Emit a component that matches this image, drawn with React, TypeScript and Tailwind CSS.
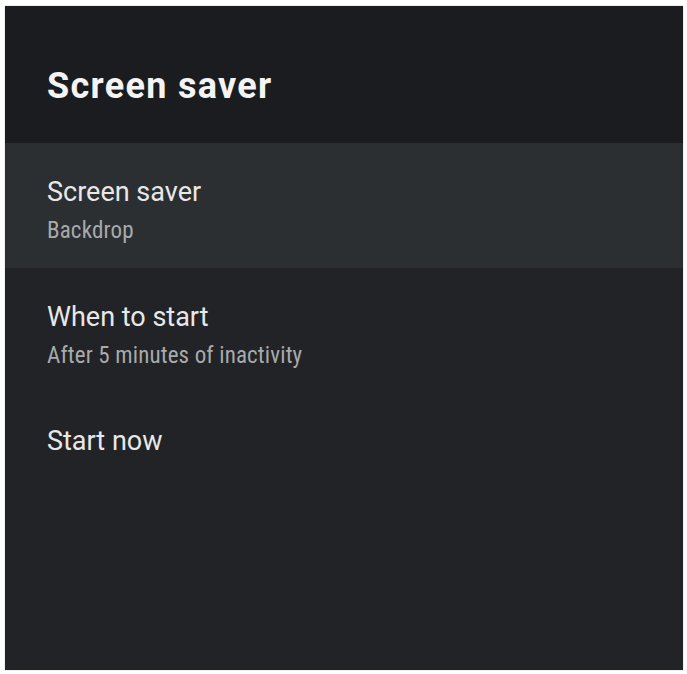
import React from 'react';

type Item = { title: string; summary?: string; selected?: boolean };

const items: Item[] = [
  { title: 'Screen saver', summary: 'Backdrop', selected: true },
  { title: 'When to start', summary: 'After 5 minutes of inactivity' },
  { title: 'Start now' },
];

const SettingRow = ({ title, summary, selected }: Item) => (
  <div className={`${selected ? 'bg-[#2c2f32] pb-[26px]' : 'pb-[25px]'} pl-[42px] pt-[36px]`}>
    <div className="text-[27px] leading-none text-[#e8e8e8]">{title}</div>
    {summary && (
      <div className="mt-[13px] text-[23px] leading-none tracking-[0.15px] text-[#a8aaac] [font-family:'Liberation_Sans_Narrow','Roboto_Condensed','DejaVu_Sans_Condensed',sans-serif]">
        {summary}
      </div>
    )}
  </div>
);

const App = () => {
  return (
    <div className="h-[674px] w-[687px] overflow-hidden bg-white pl-[5px] pt-[6px] font-['Roboto',sans-serif]">
      <div className="flex h-[664px] w-[678px] flex-col bg-[#212326] shadow-[0_0_1px_rgba(0,0,0,0.4)]">
        <div className="h-[137px] bg-[#1b1c1f] pl-[42px] pt-[62px]">
          <h1 className="text-[36px] font-bold leading-none tracking-[1.3px] text-[#f4f4f4]">Screen saver</h1>
        </div>
        {items.map((item) => (
          <SettingRow key={item.title} {...item} />
        ))}
      </div>
    </div>
  );
};

export default App;
